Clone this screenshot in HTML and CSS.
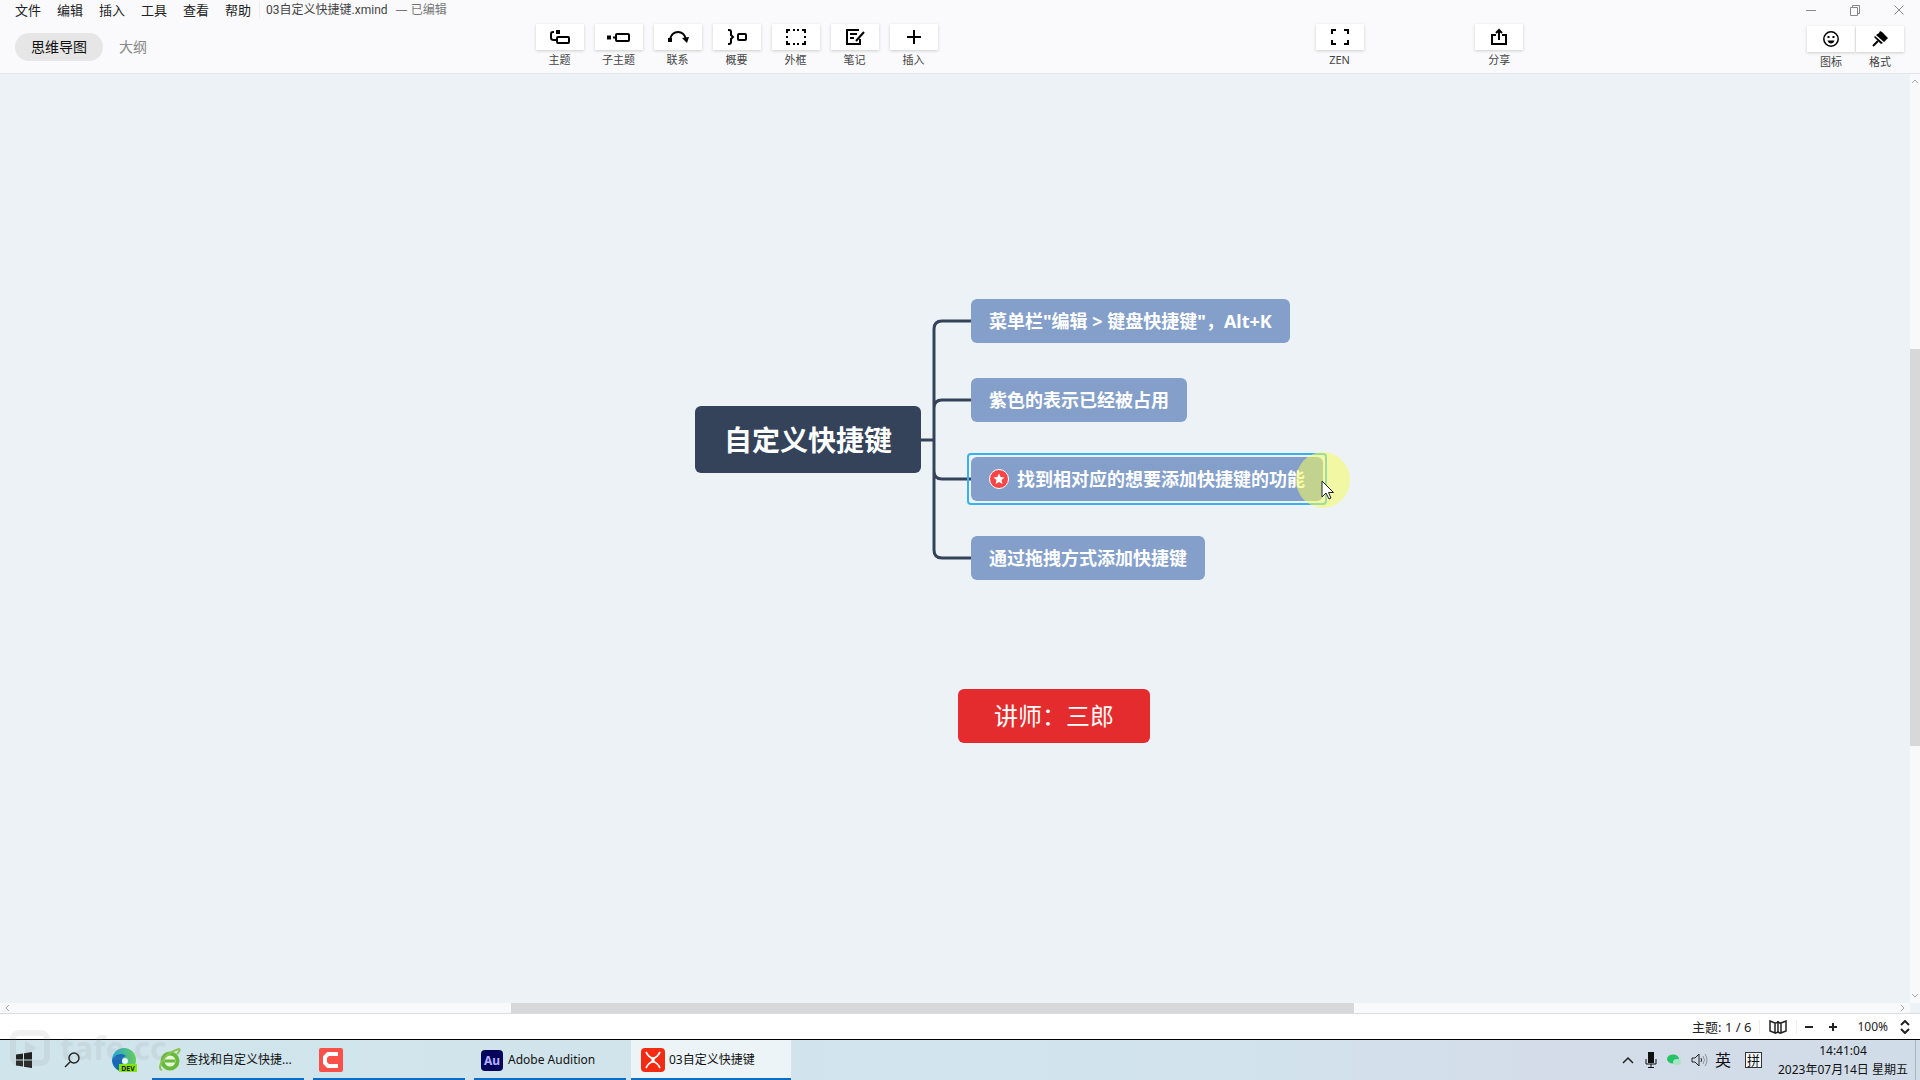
FILE: index.html
```html
<!DOCTYPE html>
<html lang="zh-CN">
<head>
<meta charset="utf-8">
<title>03自定义快捷键.xmind</title>
<link rel="stylesheet" href="styles.css">
</head>
<body>
<header class="header">
  <div class="titlebar">
    <nav class="menu">
      <button>文件</button><button>编辑</button><button>插入</button><button>工具</button><button>查看</button><button>帮助</button>
    </nav>
    <span class="filename">03自定义快捷键.xmind</span>
    <span class="edited">— 已编辑</span>
    <div class="window-controls">
      <button aria-label="最小化"><svg width="12" height="12" viewBox="0 0 12 12"><path d="M1 6.5h10"/></svg></button>
      <button aria-label="还原"><svg width="12" height="12" viewBox="0 0 12 12"><path d="M1.500 3.500h7v8h-7zM3.500 3.500v-2h7v8h-2"/></svg></button>
      <button aria-label="关闭"><svg width="12" height="12" viewBox="0 0 12 12"><path d="M1.500 1.500l9 9M10.500 1.500l-9 9"/></svg></button>
    </div>
  </div>
  <div class="toolbar">
    <div class="views">
      <button class="view view-on">思维导图</button>
      <button class="view">大纲</button>
    </div>
    <div class="tools">
      <button class="tool"><span class="tool-face"><svg width="22" height="18" viewBox="0 0 22 18"><path d="M7 12H5Q2 12 2 10V6Q2 4 4 4H5"/><rect x="8" y="9" width="12" height="6" rx="1"/><path class="fill" d="M7 2h4v4H7z"/></svg></span>主题</button>
      <button class="tool"><span class="tool-face"><svg width="26" height="18" viewBox="0 0 26 18"><rect x="10" y="6" width="13" height="7" rx="1"/><path d="M7 9.500h3"/><path class="fill" d="M1 7.500h4v4H1z"/></svg></span>子主题</button>
      <button class="tool"><span class="tool-face"><svg width="24" height="18" viewBox="0 0 24 18"><path d="M4 11Q6 4 12 4t8 7"/><path class="fill" d="M2 10h4v4H2zM16 10l7-1-2 6z"/></svg></span>联系</button>
      <button class="tool"><span class="tool-face"><svg width="24" height="18" viewBox="0 0 24 18"><path d="M3 2h1q2 0 2 2v3l2 2-2 2v3q0 2-2 2H3"/><rect x="13" y="6" width="8" height="6" rx="1"/></svg></span>概要</button>
      <button class="tool"><span class="tool-face"><svg width="22" height="18" viewBox="0 0 22 18"><path d="M2 5V2h3M8 2h2M12 2h2M17 2h3v3M20 8v2M20 13v3h-3M14 16h-2M10 16H8M5 16H2v-3M2 10V8"/></svg></span>外框</button>
      <button class="tool"><span class="tool-face"><svg width="22" height="18" viewBox="0 0 22 18"><path d="M15 2H3v14h13v-5M6 6h7M6 10h4M20 4l-8 9"/></svg></span>笔记</button>
      <button class="tool"><span class="tool-face"><svg width="22" height="18" viewBox="0 0 22 18"><path d="M11 2v14M4 9h14"/></svg></span>插入</button>
    </div>
    <div class="zen">
      <button class="tool"><span class="tool-face"><svg width="22" height="18" viewBox="0 0 22 18"><path d="M3 6V2h4M15 2h4v4M19 12v4h-4M7 16H3v-4"/></svg></span>ZEN</button>
    </div>
    <div class="share">
      <button class="tool"><span class="tool-face"><svg width="22" height="18" viewBox="0 0 22 18"><path d="M8 7H4v9h14V7h-4M11 12V2M8 5l3-3 3 3"/></svg></span>分享</button>
    </div>
    <div class="panels">
      <button class="tool"><span class="tool-face"><svg width="20" height="18" viewBox="0 0 20 18"><circle class="thin" cx="10" cy="9" r="7.200"/><path class="fill" d="M6.500 10.500h7q-1 3-3.500 3t-3.500-3zM6.500 6h2v2h-2zM11.500 6h2v2h-2z"/></svg></span>图标</button>
      <button class="tool"><span class="tool-face"><svg width="20" height="18" viewBox="0 0 20 18"><path class="fill" d="M10 1l2 1 1 1 5 5-4 4-8-7 3-2zM5 6l8 7-2 1-7-7z"/><path d="M8 11l-5 5"/></svg></span>格式</button>
    </div>
  </div>
</header>

<main class="canvas">
  <div class="map">
    <svg class="links" width="60" height="260" viewBox="0 0 60 260"><path d="M0 131h13M52 12H21q-8 0-8 8v221q0 8 8 8h31M13 99q0-8 8-8h31M13 162q0 8 8 8h31"/></svg>
    <div class="node root">自定义快捷键</div>
    <div class="node topic topic-1">菜单栏"编辑 &gt; 键盘快捷键"，Alt+K</div>
    <div class="node topic topic-2">紫色的表示已经被占用</div>
    <div class="node topic topic-3"><svg width="20" height="20" viewBox="0 0 20 20"><circle cx="10" cy="10" r="9.500" fill="#f94545" stroke="#fff"/><path fill="#fff" d="M10 4.500l1.600 3.600 3.900.4-2.900 2.600.8 3.900-3.400-2-3.400 2 .8-3.900-2.900-2.600 3.900-.4z"/></svg>找到相对应的想要添加快捷键的功能</div>
    <div class="node topic topic-4">通过拖拽方式添加快捷键</div>
    <div class="node teacher">讲师：三郎</div>
    <div class="halo"></div>
    <svg class="pointer" width="14" height="21" viewBox="0 0 14 21"><path fill="#fff" stroke="#222" d="M1 1v16l4-4 3 6 2-1-2.500-5.500H12.500z"/></svg>
  </div>
  <div class="vscroll"><svg width="8" height="6" viewBox="0 0 8 6"><path d="M1 5l3-3 3 3"/></svg><div class="vtrack"><div class="vthumb"></div></div><svg width="8" height="6" viewBox="0 0 8 6"><path d="M1 1l3 3 3-3"/></svg></div>
  <div class="hscroll"><svg width="6" height="8" viewBox="0 0 6 8"><path d="M5 1L2 4l3 3"/></svg><div class="htrack"><div class="hthumb"></div></div><svg width="6" height="8" viewBox="0 0 6 8"><path d="M1 1l3 3-3 3"/></svg></div>
</main>

<div class="status">
  <span class="count">主题: 1 / 6</span>
  <button class="map-button" aria-label="导航图"><svg width="18" height="14" viewBox="0 0 18 14"><path d="M1 1l5 2v10l-5-2zM6 3q3 0 3-2v10q0 2-3 2M9 1q0 2 3 2v10q-3 0-3-2M12 3l5-2v10l-5 2"/></svg></button>
  <button class="zoom-button" aria-label="缩小"><svg width="10" height="10" viewBox="0 0 10 10"><path d="M1 5h8"/></svg></button>
  <button class="zoom-button" aria-label="放大"><svg width="10" height="10" viewBox="0 0 10 10"><path d="M1 5h8M5 1v8"/></svg></button>
  <button class="percent">100%<svg width="10" height="14" viewBox="0 0 10 14"><path d="M1 5l4-4 4 4M1 9l4 4 4-4"/></svg></button>
</div>

<footer class="taskbar">
  <button class="launch" aria-label="开始"><svg width="16" height="16" viewBox="0 0 16 16"><path fill="#222" d="M0 2.500l7-1v6H0zM8 1.300L16 0v7.500H8zM0 8.500h7v6l-7-1zM8 8.500h8V16l-8-1.300z"/></svg></button>
  <button class="launch" aria-label="搜索"><svg width="18" height="18" viewBox="0 0 18 18"><circle cx="11" cy="7" r="5" fill="none" stroke="#222" stroke-width="1.500"/><path d="M7 11l-5 5" stroke="#222" stroke-width="1.500"/></svg></button>
  <button class="launch launch-wide" aria-label="Edge Dev"><svg width="26" height="26" viewBox="0 0 26 26"><defs><linearGradient id="edge" x1="0" y1="0" x2="1" y2="0"><stop offset="0" stop-color="#22a7dc"/><stop offset="1" stop-color="#68cd57"/></linearGradient></defs><circle cx="13" cy="13" r="12" fill="url(#edge)"/><path fill="#1968b8" d="M1 13q3-6 9-6 3 0 5 2-4 1-4 5t4 7q-2 4-5 3-8-2-9-11z"/><circle cx="14" cy="14" r="3" fill="#e7f4fa"/><rect x="8" y="17" width="18" height="8" fill="#83e509"/><text x="17" y="24" text-anchor="middle" class="dev">DEV</text></svg></button>
  <button class="task"><svg width="24" height="24" viewBox="0 0 24 24"><circle cx="12" cy="13" r="7.500" fill="#e6f7da" stroke="#67b93a" stroke-width="4"/><path d="M7 13h10" stroke="#67b93a" stroke-width="3"/><path d="M4 22Q0 21 4 13 10 4 21 1q2 1-2 5" fill="none" stroke="#8ac451" stroke-width="2"/></svg><span>查找和自定义快捷...</span></button>
  <button class="task" aria-label="Camtasia"><svg width="24" height="24" viewBox="0 0 24 24"><rect width="24" height="24" rx="2" fill="#f9504a"/><path d="M19 6H9L6 9v6l3 3h10" fill="none" stroke="#fff" stroke-width="4"/></svg></button>
  <button class="task task-last"><svg width="24" height="24" viewBox="0 0 24 24"><rect x="1" y="2" width="22" height="21" rx="4" fill="#05065b"/><text x="12" y="17" text-anchor="middle" class="au">Au</text></svg><span>Adobe Audition</span></button>
  <button class="task task-on"><svg width="24" height="24" viewBox="0 0 24 24"><rect width="24" height="24" rx="4" fill="#f22b12"/><path d="M5 4q3 6 7 6t7-6M5 20q3-6 7-6t7 6M10 10l4 4M14 10l-4 4" fill="none" stroke="#fff" stroke-width="1.700"/></svg><span>03自定义快捷键</span></button>
  <div class="tray">
    <svg width="14" height="10" viewBox="0 0 14 10"><path d="M2 8l5-5 5 5" fill="none" stroke="#222" stroke-width="1.500"/></svg>
    <svg width="12" height="18" viewBox="0 0 12 18"><rect x="3" y="1" width="6" height="11" fill="#111"/><path d="M1 8v5h10V8M6 13v4M3 16.500h6" fill="none" stroke="#111"/></svg>
    <svg width="14" height="14" viewBox="0 0 14 14"><ellipse cx="6" cy="6" rx="6" ry="4.500" fill="#25c269"/><ellipse cx="10" cy="9" rx="4" ry="3" fill="#a8e6c2"/></svg>
    <svg width="18" height="16" viewBox="0 0 18 16"><path d="M1 6h3l4-4v12l-4-4H1zM10 6q1 2 0 4" fill="none" stroke="#222"/><path d="M12 4q3 4 0 8M14 2q4 6 0 12" fill="none" stroke="#8b93a0"/></svg>
    <span class="ime">英</span>
    <span class="pinyin">拼</span>
    <div class="clock"><span>14:41:04</span><span>2023年07月14日 星期五</span></div>
  </div>
  <div class="watermark"><svg width="40" height="36" viewBox="0 0 40 36"><rect x="3" y="3" width="34" height="30" rx="6" fill="none" stroke="#888" stroke-width="6"/><path d="M15 11l12 7-12 7z" fill="#888"/></svg>tafe.cc</div>
</footer>
</body>
</html>
```
FILE: styles.css
```css
* { box-sizing: border-box; }
body {
  margin: 0;
  height: 100vh;
  display: flex;
  flex-direction: column;
  overflow: hidden;
  background: #fff;
  color: #222;
  font: 12px/16px "Noto Sans", "Noto Sans CJK SC", sans-serif;
}
button { margin: 0; padding: 0; border: 0; background: none; font: inherit; color: inherit; }
svg { display: block; flex: none; }

.header { flex: none; height: 74px; background: #fafafc; border-bottom: 1px solid #e3e6e8; }
.titlebar { display: flex; align-items: center; height: 20px; padding: 0 15px; }
.menu { display: flex; gap: 16px; font-size: 13px; line-height: 18px; padding-right: 8px; margin-right: 6px; border-right: 1px solid #eee; }
.filename { font-family: Roboto, "Noto Sans CJK SC", sans-serif; color: #444; margin-right: 8px; }
.edited { color: #777; }
.window-controls { margin-left: auto; display: flex; gap: 32px; }
.window-controls path { fill: none; stroke: #888; }

.toolbar {
  display: grid;
  grid-template-columns: 28% 40% 8% 1fr auto;
  align-items: start;
  height: 53px;
  padding-top: 4px;
}
.views { display: flex; padding: 9px 0 0 15px; font-size: 14px; }
.view { height: 28px; padding: 0 16px; border-radius: 14px; color: #888; }
.view-on { background: #e6e6e6; color: #111; }
.tools { display: flex; gap: 11px; justify-content: flex-start; }
.toolbar { padding-left: 0; grid-template-columns: calc(28% - 2px) 40% 8% 1fr auto; }
.tool { width: 48px; display: flex; flex-direction: column; align-items: center; font-size: 11px; line-height: 16px; color: #444; gap: 2px; }
.tool-face {
  align-self: stretch;
  height: 26px;
  display: flex;
  align-items: center;
  justify-content: center;
  background: #fff;
  box-shadow: 0 1px 3px #ccc;
}
.tool-face svg { fill: none; stroke: #000; stroke-width: 2; }
.tool-face .fill { fill: #000; stroke: none; }
.tool-face .thin { stroke-width: 1.5; }
.zen { display: flex; padding-left: 12px; }
.share { display: flex; padding-left: 18px; }
.panels { display: flex; gap: 1px; padding: 2px 16px 0 0; }

.canvas {
  flex: 1;
  min-height: 0;
  display: grid;
  grid-template-columns: 1fr 10px;
  grid-template-rows: 1fr 10px;
  background: #edf2f6;
}
.map { position: relative; }
.links { position: absolute; left: 921px; top: 235px; fill: none; stroke: #34435a; stroke-width: 3; }
.node { position: absolute; display: flex; align-items: center; white-space: nowrap; color: #fff; border-radius: 6px; }
.root { left: 695px; top: 332px; height: 67px; padding: 0 29px; background: #34435a; font-size: 28px; font-weight: 700; }
.topic { left: 971px; height: 44px; padding: 0 18px; gap: 8px; background: #849fca; font-size: 18px; font-weight: 700; }
.topic-1 { top: 225px; }
.topic-2 { top: 304px; }
.topic-3 { top: 383px; }
.topic-3::after { content: ""; position: absolute; inset: -4px; border: 2px solid #39b1f0; border-radius: 4px; }
.topic-4 { top: 462px; }
.teacher { left: 958px; top: 615px; height: 54px; padding: 0 36px; background: #e42c2e; font-size: 24px; }
.halo { position: absolute; left: 1296px; top: 378px; width: 54px; height: 56px; border-radius: 50%; background: #f6fb5e; opacity: 0.55; }
.pointer { position: absolute; left: 1321px; top: 406px; }

.vscroll, .hscroll { display: flex; align-items: center; background: #f8f9fa; }
.vscroll { flex-direction: column; padding: 4px 0; gap: 4px; }
.hscroll { padding: 0 4px; gap: 4px; }
.vscroll svg, .hscroll svg { fill: none; stroke: #aaa; }
.vtrack { flex: 1; align-self: stretch; display: flex; flex-direction: column; }
.vtrack::before { content: ""; height: 29%; }
.vthumb { height: 44%; background: #d6d8da; }
.htrack { flex: 1; align-self: stretch; }
.hthumb { width: 44.8%; height: 100%; margin-left: 26.4%; background: #d6d8da; }

.status {
  flex: none;
  height: 27px;
  display: flex;
  align-items: center;
  justify-content: flex-end;
  padding-right: 10px;
  border-top: 1px solid #ddd;
  border-bottom: 1px solid #000;
}
.count { font-size: 13px; }
.status svg { fill: none; stroke: #222; stroke-width: 2; }
.map-button { padding: 0 9px; margin-left: 8px; border: solid #eee; border-width: 0 1px; }
.map-button svg { stroke-width: 1.5; }
.zoom-button { padding: 0 7px; }
.percent { display: flex; align-items: center; gap: 12px; margin-left: 12px; }

.taskbar {
  flex: none;
  position: relative;
  height: 40px;
  display: flex;
  background: linear-gradient(90deg, #d0e5eb, #d2e3ed 65%, #d4dcea 80%, #d0dce7);
  color: #111;
}
.launch { width: 48px; display: flex; align-items: center; justify-content: center; }
.launch-wide { width: 56px; }
.task { width: 152px; margin-right: 9px; padding: 2px 6px 0; display: flex; align-items: center; gap: 4px; border-bottom: 2px solid #0c6dc5; white-space: nowrap; }
.task-last { margin-right: 5px; }
.task-on { width: 160px; padding: 2px 10px 0; background: #edf4f8; }
.dev { font: 700 7px "Noto Sans", sans-serif; fill: #222; }
.au { font: 700 12px "Noto Sans", sans-serif; fill: #b3b0ff; }
.tray { margin-left: auto; margin-right: 4px; padding-right: 7px; border-right: 1px solid #aab5c0; display: flex; align-items: center; gap: 10px; }
.ime { font-size: 16px; margin: 0 4px 0 -4px; }
.pinyin { font-size: 13px; line-height: 14px; padding: 0 1px; border: 1px solid #333; background: #f5f7fa; }
.clock { display: flex; flex-direction: column; align-items: center; line-height: 19px; margin-left: 6px; }
.watermark { position: absolute; left: 10px; top: -10px; display: flex; align-items: center; gap: 10px; font: 700 32px/36px "Noto Sans", sans-serif; color: #888; opacity: 0.12; pointer-events: none; }
```
